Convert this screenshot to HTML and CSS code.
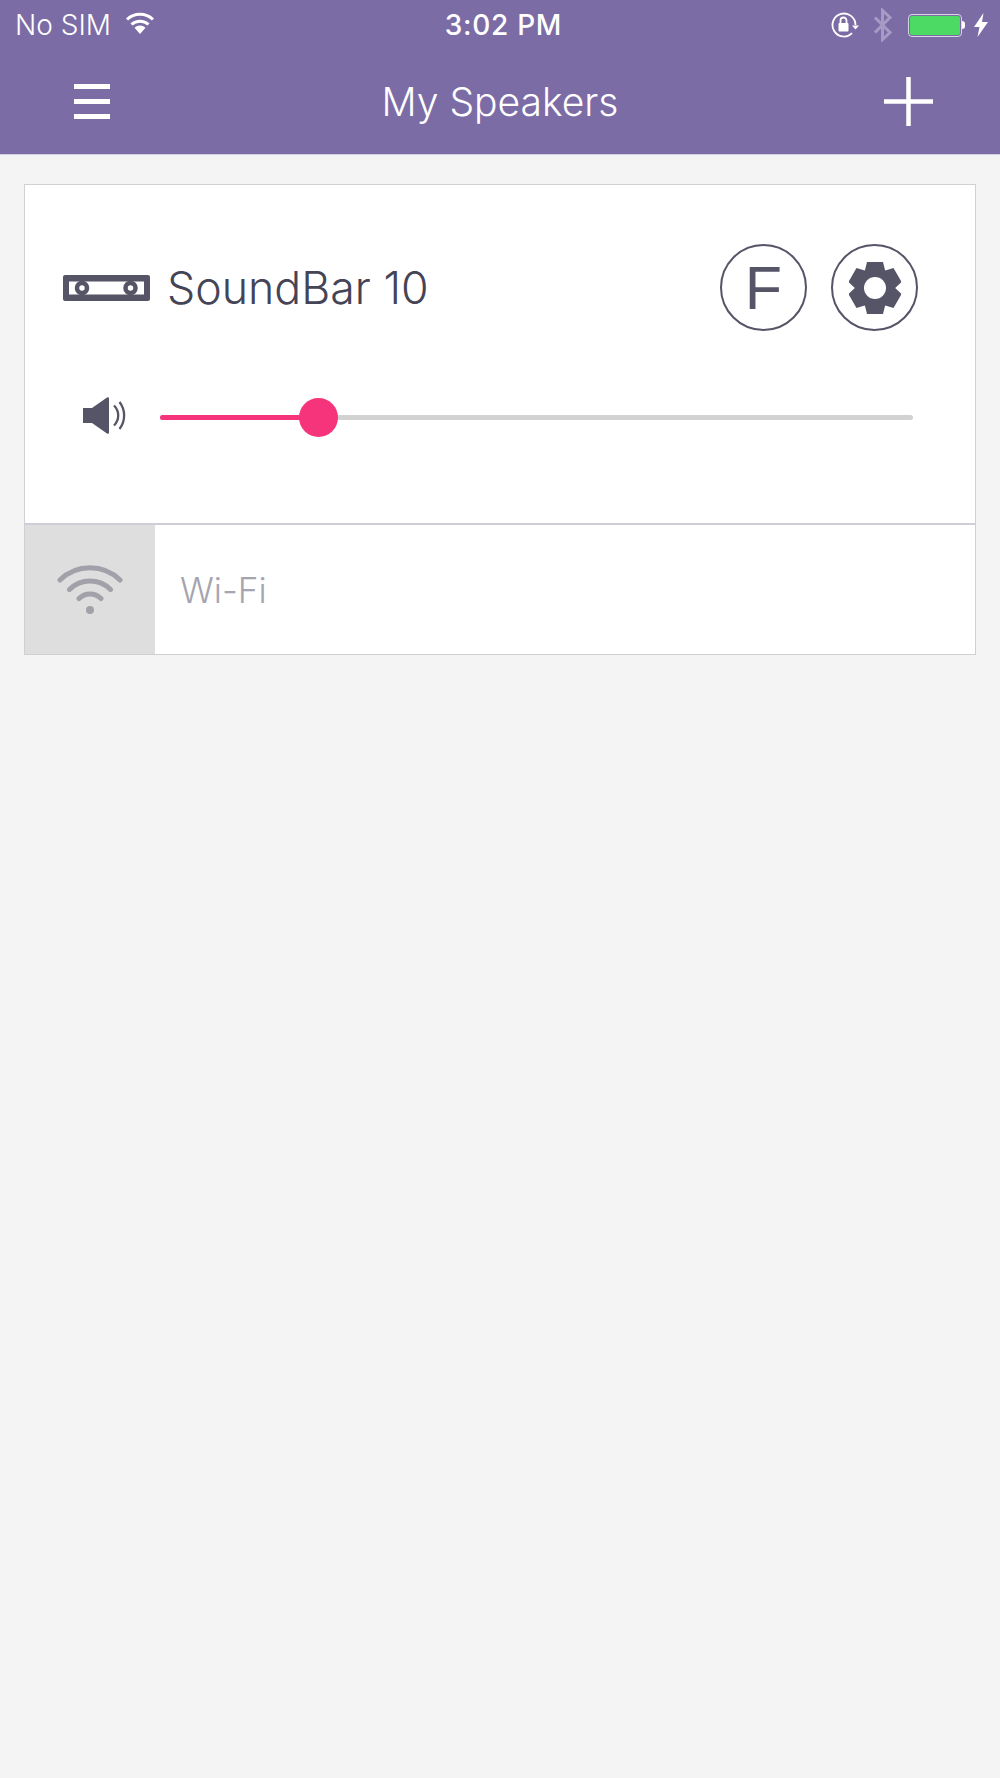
FILE: index.html
```html
<!DOCTYPE html>
<html lang="en">
<head>
    <meta charset="UTF-8">
    <meta name="viewport" content="width=device-width, initial-scale=1.0">
    <title>My Speakers</title>
    <link rel="stylesheet" href="styles.css">
</head>
<body>

    <div class="header">
        <div class="status-bar">
            <div class="status-left">
                <span class="carrier">No SIM</span>
                <svg class="wifi-small" width="30" height="22" viewBox="0 0 30 22">
                    <path d="M15 22l-5.500-6.200a8 8 0 0 1 11 0z" fill="#fff"/>
                    <path d="M6.500 12.500a12.500 12.500 0 0 1 17 0" fill="none" stroke="#fff" stroke-width="3"/>
                    <path d="M2 7.500a19 19 0 0 1 26 0" fill="none" stroke="#fff" stroke-width="3"/>
                </svg>
            </div>
            <span class="clock">3:02 PM</span>
            <div class="status-right">
                <svg width="28" height="26" viewBox="0 0 28 26">
                    <path d="M24.500 13a11.500 11.500 0 1 0-3.400 8.200" fill="none" stroke="#fff" stroke-width="1.800"/>
                    <path d="M21 13.500h7l-3.500 4z" fill="#fff"/>
                    <rect x="7.500" y="11" width="10" height="8.500" rx="1" fill="#fff"/>
                    <path d="M9.500 11V8.500a3 3 0 0 1 6 0V11" fill="none" stroke="#fff" stroke-width="1.800"/>
                </svg>
                <svg class="bluetooth" width="20" height="34" viewBox="0 0 20 34">
                    <path d="M2 9.500l15 15-7.500 7V2.500l7.500 7-15 15" fill="none" stroke="#a79bc5" stroke-width="3"/>
                </svg>
                <div class="battery">
                    <div class="battery-body"><div class="battery-fill"></div></div>
                    <div class="battery-tip"></div>
                </div>
                <svg width="14" height="24" viewBox="0 0 14 24">
                    <path d="M9.500 0L0 14h5.500L3.500 24 14 9H8z" fill="#fff"/>
                </svg>
            </div>
        </div>
        <div class="nav-bar">
            <div class="menu-icon">
                <span></span>
                <span></span>
                <span></span>
            </div>
            <h1 class="nav-title">My Speakers</h1>
            <svg class="add-icon" width="49" height="49" viewBox="0 0 49 49">
                <path d="M24.500 0v49M0 24.500h49" stroke="#fff" stroke-width="4.500"/>
            </svg>
        </div>
    </div>

    <div class="card">
        <div class="speaker">
            <div class="speaker-row">
                <svg class="soundbar-icon" width="87" height="26" viewBox="0 0 87 26">
                    <path fill-rule="evenodd" fill="#565567" d="M2 0h83a2 2 0 0 1 2 2v22a2 2 0 0 1-2 2H2a2 2 0 0 1-2-2V2a2 2 0 0 1 2-2zM6 6.500v13h75v-13z"/>
                    <circle cx="19" cy="13" r="5" fill="#fff" stroke="#565567" stroke-width="4.500"/>
                    <circle cx="67.500" cy="13" r="5" fill="#fff" stroke="#565567" stroke-width="4.500"/>
                </svg>
                <span class="speaker-name">SoundBar 10</span>
                <div class="speaker-actions">
                    <div class="round-btn">F</div>
                    <div class="round-btn">
                        <svg width="52" height="52" viewBox="-26 -26 52 52">
                            <g fill="#565567">
                                <circle r="20"/>
                                <path d="M-8-26H8L10.500-16H-10.500z"/>
                                <path transform="rotate(60)" d="M-8-26H8L10.500-16H-10.500z"/>
                                <path transform="rotate(120)" d="M-8-26H8L10.500-16H-10.500z"/>
                                <path transform="rotate(180)" d="M-8-26H8L10.500-16H-10.500z"/>
                                <path transform="rotate(240)" d="M-8-26H8L10.500-16H-10.500z"/>
                                <path transform="rotate(300)" d="M-8-26H8L10.500-16H-10.500z"/>
                            </g>
                            <circle r="11" fill="#fff"/>
                        </svg>
                    </div>
                </div>
            </div>
            <div class="volume-row">
                <svg class="volume-icon" width="43" height="37" viewBox="0 0 43 37">
                    <path fill="#565567" d="M0 11h9L24 .500a1.200 1.200 0 0 1 2 1v34a1.200 1.200 0 0 1-2 1L9 26H0z"/>
                    <path d="M31 8.500a14 14 0 0 1 0 20M36.500 5a22 22 0 0 1 0 27" fill="none" stroke="#565567" stroke-width="2.300"/>
                </svg>
                <div class="slider">
                    <div class="slider-fill" style="width: 159px"></div>
                    <div class="slider-thumb"></div>
                </div>
            </div>
        </div>
        <div class="network">
            <div class="network-icon">
                <svg class="network-wifi" width="66" height="52" viewBox="0 0 66 52">
                    <path d="M3 17a43 43 0 0 1 60 0M12.500 26.500a29 29 0 0 1 41 0M22 35.500a15.500 15.500 0 0 1 22 0" fill="none" stroke="#a2a1aa" stroke-width="5" stroke-linecap="round"/>
                    <circle cx="33" cy="47" r="4" fill="#a2a1aa"/>
                </svg>
            </div>
            <span class="network-name">Wi-Fi</span>
        </div>
    </div>

</body>
</html>
```

FILE: styles.css
```css
body {
    margin: 0;
    min-height: 1778px;
    font-family: Inter, "Liberation Sans", sans-serif;
    background-color: #f4f4f4;
}
.header {
    background: #7c6ca6;
    height: 154px;
    border-bottom: 1px solid #d3cee1;
    color: white;
}
.status-bar {
    position: relative;
    display: flex;
    align-items: center;
    justify-content: space-between;
    height: 50px;
    padding: 0 12px 0 15px;
}
.status-left {
    display: flex;
    align-items: center;
    gap: 14px;
}
.carrier {
    font-size: 28px;
    font-weight: 300;
}
.wifi-small {
    margin-bottom: 4px;
}
.clock {
    position: absolute;
    left: 7px;
    right: 0;
    text-align: center;
    font-size: 28px;
    font-weight: 500;
    letter-spacing: 0.7px;
}
.status-right {
    display: flex;
    align-items: center;
}
.bluetooth {
    margin-left: 14px;
}
.battery {
    display: flex;
    align-items: center;
    margin-left: 15px;
    margin-right: 9px;
}
.battery-body {
    width: 54px;
    height: 23px;
    box-sizing: border-box;
    padding: 1px;
    border: 1px solid #d8d3e6;
    border-radius: 4px;
}
.battery-fill {
    height: 100%;
    background: #4cd964;
    border-radius: 2px;
}
.battery-tip {
    width: 3px;
    height: 8px;
    background: white;
    border-radius: 0 3px 3px 0;
}
.nav-bar {
    position: relative;
    display: flex;
    align-items: center;
    justify-content: space-between;
    height: 102px;
    padding: 0 67px 2px 74px;
}
.menu-icon {
    display: flex;
    flex-direction: column;
    gap: 10px;
    width: 36px;
}
.menu-icon span {
    height: 5px;
    background: white;
}
.nav-title {
    position: absolute;
    left: 0;
    right: 0;
    margin: 0;
    text-align: center;
    font-size: 39px;
    font-weight: 300;
}
.card {
    margin: 29px 24px 0;
    background: white;
    border: 1px solid #d0d0d4;
}
.speaker {
    box-sizing: border-box;
    height: 340px;
    padding: 59px 57px 0 38px;
    border-bottom: 2px solid #cfced8;
}
.speaker-row {
    display: flex;
    align-items: center;
    height: 87px;
}
.speaker-name {
    margin-left: 17px;
    font-size: 44.700px;
    font-weight: 300;
    color: #454456;
}
.speaker-actions {
    display: flex;
    gap: 24px;
    margin-left: auto;
}
.round-btn {
    display: flex;
    align-items: center;
    justify-content: center;
    box-sizing: border-box;
    width: 87px;
    height: 87px;
    border: 2px solid #565567;
    border-radius: 50%;
    font-family: "Liberation Sans", sans-serif;
    font-size: 61px;
    color: #565567;
}
.volume-row {
    display: flex;
    align-items: center;
    margin-top: 67px;
    padding-left: 20px;
    height: 39px;
}
.volume-icon {
    margin-bottom: 5px;
}
.slider {
    position: relative;
    flex: 1;
    height: 5px;
    margin-left: 34px;
    margin-right: 5px;
    background: #d2d2d2;
    border-radius: 3px;
}
.slider-fill {
    height: 100%;
    background: #f5347b;
    border-radius: 3px;
}
.slider-thumb {
    position: absolute;
    top: -17px;
    left: 139px;
    width: 39px;
    height: 39px;
    background: #f5347b;
    border-radius: 50%;
}
.network {
    display: flex;
    align-items: center;
    height: 129px;
}
.network-icon {
    display: flex;
    align-items: center;
    justify-content: center;
    width: 130px;
    height: 100%;
    background: #dedede;
}
.network-wifi {
    margin-bottom: 2px;
}
.network-name {
    margin-left: 25px;
    font-size: 35px;
    font-weight: 300;
    color: #a5a4b0;
}
```
